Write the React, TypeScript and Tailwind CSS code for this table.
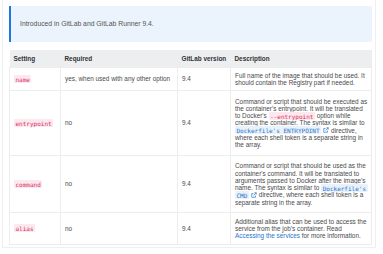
import React from "react";

const Ext = () => (
  <svg width="6" height="6" viewBox="0 0 16 16" className="inline-block align-[-0.5px] mx-[2px]" fill="none" stroke="#1f75cb" strokeWidth="1.8">
    <path d="M9 2h5v5M14 2L7 9M12 9.5V14H2V4h4.5" />
  </svg>
);

const Code = ({ children }: { children: React.ReactNode }) => (
  <code className="font-['DejaVu_Sans_Mono',monospace] text-[6px] text-[#dd2b5e] bg-[#fbe9ef] px-[1.5px] py-[0.5px] rounded-[1px]">{children}</code>
);

const LinkCode = ({ children }: { children: React.ReactNode }) => (
  <code className="font-['DejaVu_Sans_Mono',monospace] text-[6px] text-[#1f75cb] bg-[#e9f1fb] px-[1.5px] py-[0.5px] rounded-[1px]">{children}</code>
);

const L = ({ children }: { children: React.ReactNode }) => <span className="block whitespace-nowrap">{children}</span>;

export default function App() {
  const td = "border border-[#ededed] px-[4px] align-middle";
  return (
    <div className="w-[383px] h-[254px] bg-white font-['Liberation_Sans',sans-serif] text-[6.4px] text-[#4a4a4a] overflow-hidden">
      <div className="ml-[2px] w-[374px] h-[248px] border-l border-b border-r border-[#efefef] pl-[6px] pt-[6px] bg-white">
        <div className="w-[363px] h-[36px] bg-[#ebf3fc] border-l-[2px] border-[#1f78e0] flex items-center pl-[9px] text-[6.8px] text-[#555]">
          Introduced in GitLab and GitLab Runner 9.4.
        </div>
        <table className="mt-[8px] w-[362px] border-collapse leading-[7.3px] table-fixed">
          <colgroup>
            <col className="w-[51px]" />
            <col className="w-[117px]" />
            <col className="w-[53px]" />
            <col className="w-[141px]" />
          </colgroup>
          <thead>
            <tr className="bg-[#edeef0] h-[17px] text-[#333] font-bold text-left">
              <th className="px-[4px] font-bold">Setting</th>
              <th className="px-[4px] font-bold">Required</th>
              <th className="px-[4px] font-bold whitespace-nowrap">GitLab version</th>
              <th className="px-[4px] font-bold">Description</th>
            </tr>
          </thead>
          <tbody>
            <tr className="h-[23px]">
              <td className={td}><Code>name</Code></td>
              <td className={td + " whitespace-nowrap"}>yes, when used with any other option</td>
              <td className={td}>9.4</td>
              <td className={td + " py-[4px]"}>
                <L>Full name of the image that should be used. It</L>
                <L>should contain the Registry part if needed.</L>
              </td>
            </tr>
            <tr className="h-[65px]">
              <td className={td}><Code>entrypoint</Code></td>
              <td className={td}>no</td>
              <td className={td}>9.4</td>
              <td className={td + " py-[4px]"}>
                <L>Command or script that should be executed as</L>
                <L>the container's entrypoint. It will be translated</L>
                <L>to Docker's <Code>--entrypoint</Code> option while</L>
                <L>creating the container. The syntax is similar to</L>
                <L><LinkCode>Dockerfile's ENTRYPOINT</LinkCode><Ext />directive,</L>
                <L>where each shell token is a separate string in</L>
                <L>the array.</L>
              </td>
            </tr>
            <tr className="h-[57px]">
              <td className={td}><Code>command</Code></td>
              <td className={td}>no</td>
              <td className={td}>9.4</td>
              <td className={td + " py-[4px]"}>
                <L>Command or script that should be used as the</L>
                <L>container's command. It will be translated to</L>
                <L>arguments passed to Docker after the image's</L>
                <L>name. The syntax is similar to <LinkCode>Dockerfile's</LinkCode></L>
                <L><LinkCode>CMD</LinkCode><Ext />directive, where each shell token is a</L>
                <L>separate string in the array.</L>
              </td>
            </tr>
            <tr className="h-[32px]">
              <td className={td}><Code>alias</Code></td>
              <td className={td}>no</td>
              <td className={td}>9.4</td>
              <td className={td + " py-[4px]"}>
                <L>Additional alias that can be used to access the</L>
                <L>service from the job's container. Read</L>
                <L><span className="text-[#1f75cb]">Accessing the services</span> for more information.</L>
              </td>
            </tr>
          </tbody>
        </table>
      </div>
    </div>
  );
}
